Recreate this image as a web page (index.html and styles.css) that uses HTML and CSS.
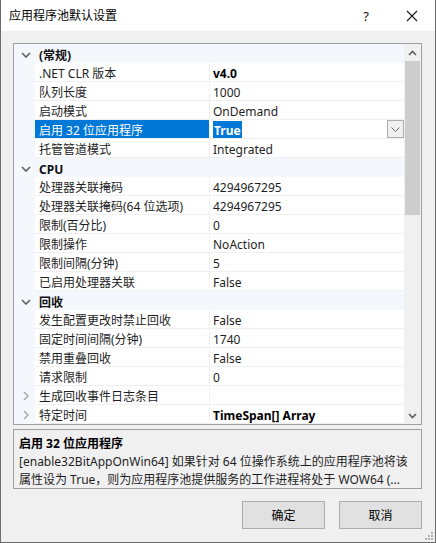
FILE: index.html
```html
<!DOCTYPE html>
<html lang="zh-CN">
<head>
<meta charset="utf-8">
<title>应用程序池默认设置</title>
<link rel="stylesheet" href="styles.css">
</head>
<body>
<div class="window">
  <div class="titlebar">
    <span class="title">应用程序池默认设置</span>
    <span class="tb-help">?</span>
    <span class="tb-close"><svg width="12" height="12" viewBox="0 0 12 12"><path d="M1 1L11 11M11 1L1 11" stroke="#1a1a1a" stroke-width="1.1" fill="none"/></svg></span>
  </div>
  <div class="content">
    <div class="grid">
      <div class="rows">
        <div class="cat"><span class="tg"><svg class="chev" width="10" height="6" viewBox="0 0 10 6"><path d="M1 1L5 5L9 1" stroke="#5f5f5f" stroke-width="1.6" fill="none"/></svg></span><span class="ct">(常规)</span></div>
        <div class="row"><span class="gut"></span><span class="nm">.NET CLR 版本</span><span class="vl"><b>v4.0</b></span></div>
        <div class="row"><span class="gut"></span><span class="nm">队列长度</span><span class="vl">1000</span></div>
        <div class="row"><span class="gut"></span><span class="nm">启动模式</span><span class="vl">OnDemand</span></div>
        <div class="row sel"><span class="gut"></span><span class="nm">启用 32 位应用程序</span><span class="vl"><b class="hl">True</b><span class="dd"><svg width="9" height="5" viewBox="0 0 9 5"><path d="M0.5 0.5L4.5 4.5L8.5 0.5" stroke="#6a6a6a" stroke-width="1" fill="none"/></svg></span></span></div>
        <div class="row"><span class="gut"></span><span class="nm">托管管道模式</span><span class="vl">Integrated</span></div>
        <div class="cat"><span class="tg"><svg class="chev" width="10" height="6" viewBox="0 0 10 6"><path d="M1 1L5 5L9 1" stroke="#5f5f5f" stroke-width="1.6" fill="none"/></svg></span><span class="ct">CPU</span></div>
        <div class="row"><span class="gut"></span><span class="nm">处理器关联掩码</span><span class="vl">4294967295</span></div>
        <div class="row"><span class="gut"></span><span class="nm">处理器关联掩码(64 位选项)</span><span class="vl">4294967295</span></div>
        <div class="row"><span class="gut"></span><span class="nm">限制(百分比)</span><span class="vl">0</span></div>
        <div class="row"><span class="gut"></span><span class="nm">限制操作</span><span class="vl">NoAction</span></div>
        <div class="row"><span class="gut"></span><span class="nm">限制间隔(分钟)</span><span class="vl">5</span></div>
        <div class="row"><span class="gut"></span><span class="nm">已启用处理器关联</span><span class="vl">False</span></div>
        <div class="cat"><span class="tg"><svg class="chev" width="10" height="6" viewBox="0 0 10 6"><path d="M1 1L5 5L9 1" stroke="#5f5f5f" stroke-width="1.6" fill="none"/></svg></span><span class="ct">回收</span></div>
        <div class="row"><span class="gut"></span><span class="nm">发生配置更改时禁止回收</span><span class="vl">False</span></div>
        <div class="row"><span class="gut"></span><span class="nm">固定时间间隔(分钟)</span><span class="vl">1740</span></div>
        <div class="row"><span class="gut"></span><span class="nm">禁用重叠回收</span><span class="vl">False</span></div>
        <div class="row"><span class="gut"></span><span class="nm">请求限制</span><span class="vl">0</span></div>
        <div class="row"><span class="gut"><svg width="6" height="10" viewBox="0 0 6 10"><path d="M1 1L5 5L1 9" stroke="#a8a8a8" stroke-width="1.5" fill="none"/></svg></span><span class="nm">生成回收事件日志条目</span><span class="vl"></span></div>
        <div class="row"><span class="gut"><svg width="6" height="10" viewBox="0 0 6 10"><path d="M1 1L5 5L1 9" stroke="#a8a8a8" stroke-width="1.5" fill="none"/></svg></span><span class="nm">特定时间</span><span class="vl"><b>TimeSpan[] Array</b></span></div>
      </div>
      <div class="sb">
        <span class="sb-btn"><svg width="9" height="6" viewBox="0 0 9 6"><path d="M1 5L4.5 1.5L8 5" stroke="#606060" stroke-width="1.7" fill="none"/></svg></span>
        <div class="sb-track"><div class="sb-thumb"></div></div>
        <span class="sb-btn"><svg width="9" height="6" viewBox="0 0 9 6"><path d="M1 1L4.5 4.5L8 1" stroke="#606060" stroke-width="1.7" fill="none"/></svg></span>
      </div>
    </div>
    <div class="desc">
      <div class="desc-title">启用 32 位应用程序</div>
      <div class="desc-line">[enable32BitAppOnWin64] 如果针对 64 位操作系统上的应用程序池将该</div>
      <div class="desc-line">属性设为 True，则为应用程序池提供服务的工作进程将处于 WOW64 (...</div>
    </div>
    <div class="buttons">
      <button class="btn">确定</button>
      <button class="btn">取消</button>
    </div>
  </div>
  <div class="grip">
    <span></span><span></span><span></span><span></span><span></span><span></span>
  </div>
</div>
</body>
</html>
```
FILE: styles.css
```css
* { box-sizing: border-box; }
html, body { margin: 0; padding: 0; }
body {
  font-family: "Noto Sans", "Noto Sans CJK SC", sans-serif;
  font-size: 12px;
  color: #000;
  background: #f0f0f0;
}
.window {
  position: relative;
  width: 436px;
  height: 543px;
  background: #f0f0f0;
  border-left: 1px solid #6b6b6b;
  border-right: 1px solid #6b6b6b;
  border-bottom: 1px solid #6b6b6b;
  display: flex;
  flex-direction: column;
}
.titlebar {
  height: 31px;
  background: #fff;
  display: flex;
  align-items: center;
  padding-left: 8px;
  flex: none;
}
.title {
  flex: 1;
  font-size: 12px;
  line-height: 16px;
  color: #000;
}
.tb-help {
  width: 14px;
  font-size: 13px;
  margin-right: 32px;
  text-align: center;
  color: #111;
}
.tb-close {
  width: 14px;
  margin-right: 16px;
  display: flex;
  align-items: center;
  justify-content: center;
}
.content {
  flex: 1;
  padding: 12px 13px 0 12px;
  display: flex;
  flex-direction: column;
}
.grid {
  height: 382px;
  border: 1px solid #a0a0a0;
  background: #fff;
  display: flex;
  flex: none;
}
.rows {
  width: 391px;
  display: flex;
  flex-direction: column;
}
.cat {
  height: 19px;
  background: #f4f7fc;
  display: flex;
  align-items: center;
}
.tg {
  width: 21px;
  display: flex;
  justify-content: center;
  padding-left: 3px;
  padding-top: 2px;
}
.ct {
  padding-left: 4px;
  padding-top: 3px;
  font-weight: bold;
  line-height: 15px;
  color: #111;
}
.row {
  height: 19px;
  display: flex;
}
.gut {
  width: 21px;
  background: #f4f7fc;
  display: flex;
  align-items: center;
  justify-content: center;
  padding-left: 3px;
  padding-top: 1px;
  flex: none;
}
.nm {
  width: 175px;
  flex: none;
  padding-left: 4px;
  padding-top: 3px;
  line-height: 15px;
  border-bottom: 1px solid #f0f0f0;
  border-right: 1px solid #f0f0f0;
  color: #1e1e1e;
  white-space: nowrap;
  overflow: hidden;
}
.vl {
  flex: 1;
  padding-left: 3px;
  line-height: 15px;
  border-bottom: 1px solid #f0f0f0;
  display: flex;
  align-items: center;
  color: #1e1e1e;
  white-space: nowrap;
  overflow: hidden;
}
.vl > b, .vl { padding-top: 0; }
.vl { padding-top: 3px; }
.vl b { font-weight: bold; color: #000; }
.sel .nm {
  background: #0078d7;
  color: #fff;
}
.sel .vl { padding-top: 0; }
.sel .vl .hl {
  background: #0078d7;
  color: #fff;
  padding: 2px 1px 0 1px;
  line-height: 15px;
}
.dd {
  margin-left: auto;
  width: 17px;
  height: 18px;
  border: 1px solid #adadad;
  background: #f0f0f0;
  display: flex;
  align-items: center;
  justify-content: center;
}
.sb {
  width: 17px;
  background: #f0f0f0;
  display: flex;
  flex-direction: column;
}
.sb-btn {
  height: 17px;
  display: flex;
  align-items: center;
  justify-content: center;
  flex: none;
}
.sb-track {
  flex: 1;
  padding: 0 1px;
}
.sb-thumb {
  height: 154px;
  background: #cdcdcd;
}
.desc {
  margin-top: 4px;
  height: 60px;
  border: 1px solid #a0a0a0;
  background: #f0f0f0;
  padding: 5px 0 0 5px;
  flex: none;
  color: #1e1e1e;
}
.desc-title {
  font-weight: bold;
  line-height: 18px;
  color: #000;
}
.desc-line {
  line-height: 18px;
  white-space: nowrap;
  overflow: hidden;
}
.buttons {
  margin-top: 12px;
  display: flex;
  justify-content: flex-end;
  gap: 14px;
}
.btn {
  width: 83px;
  height: 28px;
  background: #e1e1e1;
  border: 1px solid #adadad;
  font-family: "Noto Sans", "Noto Sans CJK SC", sans-serif;
  font-size: 12px;
  color: #000;
  padding: 0;
}
.grip {
  position: absolute;
  right: 2px;
  bottom: 2px;
  width: 9px;
  height: 9px;
}
.grip span {
  position: absolute;
  width: 2px;
  height: 2px;
  background: #b4b4b4;
}
.grip span:nth-child(1) { right: 0; bottom: 0; }
.grip span:nth-child(2) { right: 3px; bottom: 0; }
.grip span:nth-child(3) { right: 6px; bottom: 0; }
.grip span:nth-child(4) { right: 0; bottom: 3px; }
.grip span:nth-child(5) { right: 3px; bottom: 3px; }
.grip span:nth-child(6) { right: 0; bottom: 6px; }
```
